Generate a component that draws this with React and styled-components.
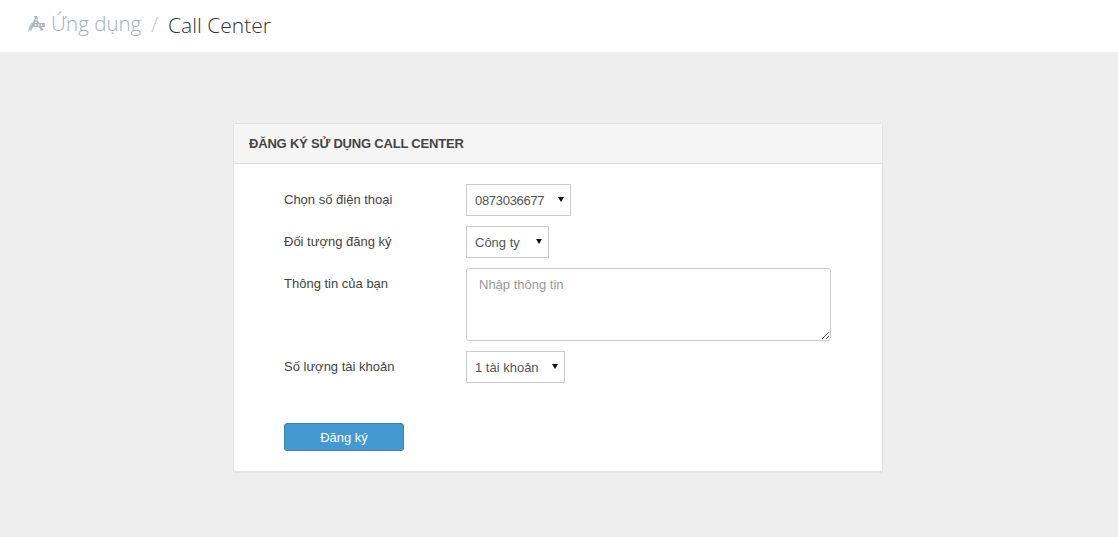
import React from 'react';
import styled, { createGlobalStyle } from 'styled-components';

const GlobalStyle = createGlobalStyle`
    html, body {
        margin: 0;
        padding: 0;
        height: 100%;
        background: #eeeeee;
    }
    body {
        font-family: 'Liberation Sans', Arial, sans-serif;
        font-size: 13px;
        color: #333;
    }
    * { box-sizing: border-box; }
`;

const Page = styled.div`
    min-height: 537px;
    background: #eeeeee;
`;

const TopBar = styled.div`
    height: 52px;
    background: #fff;
    padding: 0 0 4px 27px;
    display: flex;
    align-items: center;
    font-family: 'Open Sans', sans-serif;
    font-weight: 300;
    line-height: 1;
`;

const Crumb = styled.span`
    color: ${(p) => (p.$active ? '#333' : '#9fb0bf')};
    font-size: ${(p) => (p.$active ? '21px' : '20.5px')};
    position: relative;
    top: ${(p) => (p.$active ? '1px' : '-1px')};
`;

const Sep = styled.span`
    color: #c4c4c4;
    margin: 0 10px;
    position: relative;
    top: 1px;
    font-size: 20px;
`;

const AppIcon = styled.svg`
    width: 19px;
    height: 18px;
    margin-right: 5px;
    flex: none;
`;

const Content = styled.div`
    display: flex;
    justify-content: center;
    padding: 71px 0 0;
`;

const Card = styled.div`
    width: 650px;
    height: 349px;
    background: #fff;
    border: 1px solid #e2e2e2;
    border-radius: 3px;
    box-shadow: 0 1px 1px rgba(0, 0, 0, 0.05);
    margin-left: -2px;
`;

const CardHead = styled.div`
    height: 40px;
    background: #f5f5f5;
    border-bottom: 1px solid #dddddd;
    padding: 0 15px;
    display: flex;
    align-items: center;
    font-weight: 700;
    font-size: 13px;
    letter-spacing: -0.2px;
    color: #444;
`;

const Form = styled.form`
    padding: 20px 50px 0;
`;

const Row = styled.div`
    display: grid;
    grid-template-columns: 182px 1fr;
    margin-bottom: 10px;
`;

const Label = styled.label`
    font-size: 13px;
    line-height: 20px;
    padding-top: 6px;
    color: #444;
`;

const SelectWrap = styled.div`
    position: relative;
    width: ${(p) => p.$width}px;
    height: 32px;
    &::after {
        content: '';
        position: absolute;
        right: 7px;
        top: 13px;
        border-left: 3px solid transparent;
        border-right: 3px solid transparent;
        border-top: 5px solid #111;
        pointer-events: none;
    }
`;

const Select = styled.select`
    appearance: none;
    width: 100%;
    height: 32px;
    background: #fff;
    border: 1px solid #cccccc;
    border-radius: 0;
    padding: 0 0 0 8px;
    font-family: 'Liberation Sans', Arial, sans-serif;
    font-size: 13px;
    letter-spacing: ${(p) => (p.$tight ? '-0.3px' : 'normal')};
    color: #555;
    outline: none;
`;

const TextArea = styled.textarea`
    display: block;
    width: 365px;
    height: 73px;
    border: 1px solid #cccccc;
    border-radius: 3px;
    padding: 6px 12px;
    font-family: 'Liberation Sans', Arial, sans-serif;
    font-size: 13px;
    line-height: 20px;
    color: #555;
    outline: none;
    &::placeholder {
        color: #999;
        opacity: 1;
    }
`;

const SubmitButton = styled.button`
    display: block;
    width: 120px;
    height: 28px;
    margin-top: 40px;
    background: #4499d2;
    border: 1px solid #3a84b5;
    border-radius: 3px;
    color: #fff;
    font-family: 'Liberation Sans', Arial, sans-serif;
    font-size: 13px;
    padding: 0;
`;

const App = () => {
    return (
        <Page>
            <GlobalStyle />
            <TopBar>
                <AppIcon viewBox="0 0 19 18">
                    <path d="M7 1 L10 1 L11 4 L8 4 Z" fill="#a9b8c5" />
                    <path d="M7.5 4 L2 14 L4 16 L9.5 5 Z" fill="#a9b8c5" />
                    <path d="M10 4 L16.5 15 L14 16 L9 6 Z" fill="#a9b8c5" />
                    <path d="M5 7 L2 12 L1 17 L4 14 Z" fill="#bcc8d2" />
                    <rect x="6" y="8" width="12" height="4" fill="#a9b8c5" />
                    <rect x="8" y="9.3" width="1.3" height="1.5" fill="#fff" />
                    <rect x="11" y="9.3" width="1.3" height="1.5" fill="#fff" />
                    <rect x="14" y="9.3" width="1.3" height="1.5" fill="#fff" />
                </AppIcon>
                <Crumb>Ứng dụng</Crumb>
                <Sep>/</Sep>
                <Crumb $active>Call Center</Crumb>
            </TopBar>
            <Content>
                <Card>
                    <CardHead>ĐĂNG KÝ SỬ DỤNG CALL CENTER</CardHead>
                    <Form onSubmit={(e) => e.preventDefault()}>
                        <Row>
                            <Label>Chọn số điện thoại</Label>
                            <SelectWrap $width={105}>
                                <Select $tight defaultValue="0873036677">
                                    <option>0873036677</option>
                                </Select>
                            </SelectWrap>
                        </Row>
                        <Row>
                            <Label>Đối tượng đăng ký</Label>
                            <SelectWrap $width={83}>
                                <Select defaultValue="Công ty">
                                    <option>Công ty</option>
                                    <option>Cá nhân</option>
                                </Select>
                            </SelectWrap>
                        </Row>
                        <Row>
                            <Label>Thông tin của bạn</Label>
                            <TextArea placeholder="Nhập thông tin" />
                        </Row>
                        <Row>
                            <Label>Số lượng tài khoản</Label>
                            <SelectWrap $width={99}>
                                <Select defaultValue="1 tài khoản">
                                    <option>1 tài khoản</option>
                                    <option>2 tài khoản</option>
                                </Select>
                            </SelectWrap>
                        </Row>
                        <SubmitButton type="submit">Đăng ký</SubmitButton>
                    </Form>
                </Card>
            </Content>
        </Page>
    );
};

export default App;
